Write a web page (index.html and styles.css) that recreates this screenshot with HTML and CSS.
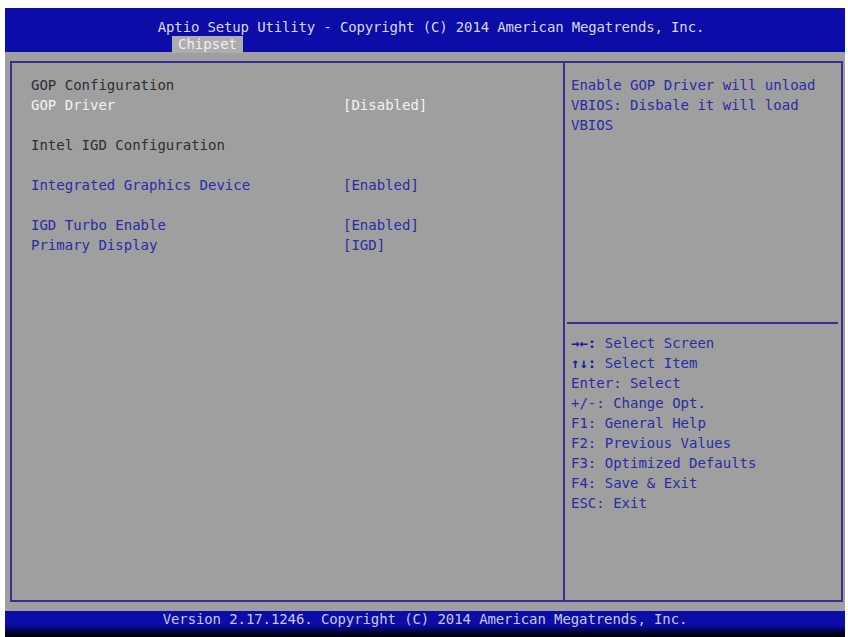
FILE: index.html
```html
<!DOCTYPE html>
<html lang="en">
<head>
    <meta charset="UTF-8">
    <title>Aptio Setup Utility - Chipset</title>
    <link rel="stylesheet" href="styles.css">
</head>
<body>
    <div class="screen">
        <div class="header">
            <div class="title">Aptio Setup Utility - Copyright (C) 2014 American Megatrends, Inc.</div>
            <div class="tabs">
                <span class="tab">Chipset</span>
            </div>
        </div>

        <div class="main">
            <div class="settings">
                <div class="row heading">GOP Configuration</div>
                <div class="row selected"><span class="name">GOP Driver</span><span class="value">[Disabled]</span></div>
                <div class="row blank"></div>
                <div class="row heading">Intel IGD Configuration</div>
                <div class="row blank"></div>
                <div class="row option"><span class="name">Integrated Graphics Device</span><span class="value">[Enabled]</span></div>
                <div class="row blank"></div>
                <div class="row option"><span class="name">IGD Turbo Enable</span><span class="value">[Enabled]</span></div>
                <div class="row option"><span class="name">Primary Display</span><span class="value">[IGD]</span></div>
            </div>
            <div class="side">
                <div class="help">
                    <div>Enable GOP Driver will unload</div>
                    <div>VBIOS: Disbale it will load</div>
                    <div>VBIOS</div>
                </div>
                <div class="keys">
                    <div><b>&rarr;&larr;:</b> Select Screen</div>
                    <div><b>&uarr;&darr;:</b> Select Item</div>
                    <div>Enter: Select</div>
                    <div>+/-: Change Opt.</div>
                    <div>F1: General Help</div>
                    <div>F2: Previous Values</div>
                    <div>F3: Optimized Defaults</div>
                    <div>F4: Save &amp; Exit</div>
                    <div>ESC: Exit</div>
                </div>
            </div>
        </div>

        <div class="footer">Version 2.17.1246. Copyright (C) 2014 American Megatrends, Inc.</div>
    </div>
</body>
</html>
```

FILE: styles.css
```css
body {
    margin: 0;
    background-color: #fff;
    font-family: "DejaVu Sans Mono", "Liberation Mono", monospace;
    font-size: 14px;
}
.screen {
    margin: 8px 3px 0 5px;
    width: 840px;
    height: 629px;
    background-color: #9f9f9f;
    display: flex;
    flex-direction: column;
}
.header {
    height: 44px;
    background-color: #0c0ca8;
    color: #d8d8e8;
    display: flex;
    flex-direction: column;
}
.title {
    text-align: center;
    padding-top: 11px;
    padding-left: 12px;
    height: 17px;
    line-height: 17px;
    letter-spacing: -0.15px;
}
.tabs {
    padding-left: 167px;
    margin-top: auto;
}
.tab {
    display: inline-block;
    background-color: #adadad;
    color: #eeeeee;
    padding: 0 6px;
    height: 17px;
    line-height: 17px;
}
.main {
    margin: 9px 2px 0 5px;
    height: 539px;
    border: 2px solid #3b2e8e;
    display: flex;
}
.settings {
    width: 553px;
    border-right: 2px solid #3b2e8e;
    padding: 12px 0 0 19px;
    box-sizing: border-box;
}
.row {
    display: flex;
    height: 20px;
    line-height: 20px;
}
.row .name {
    width: 312px;
}
.heading {
    color: #2e2e36;
}
.selected {
    color: #f2f2f2;
}
.option {
    color: #2c2ca4;
}
.side {
    flex: 1;
    display: flex;
    flex-direction: column;
    color: #2c2ca4;
}
.help {
    height: 247px;
    padding: 12px 0 0 4px;
    line-height: 20px;
    border-bottom: 2px solid #3b2e8e;
    margin-right: 3px;
    margin-left: 2px;
}
.help div, .keys div {
    height: 20px;
}
.keys {
    padding: 9px 0 0 6px;
    line-height: 20px;
}
.keys b {
    color: #1c1c9c;
}
.footer {
    margin-top: 9px;
    height: 26px;
    line-height: 17px;
    text-align: center;
    color: #c8c8e4;
    letter-spacing: -0.1px;
    background: linear-gradient(#0c0ca8 0, #0c0ca8 14px, #000 25px);
}
```
